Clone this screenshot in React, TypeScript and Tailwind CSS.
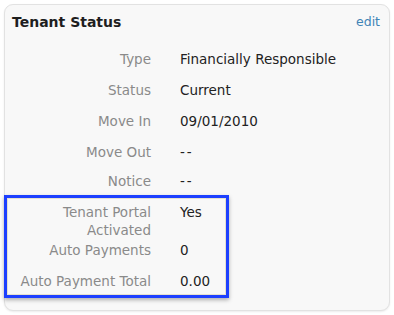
import React from "react";

const rows1: [string, string, string][] = [
  ["Type", "Financially Responsible", "h-[31px]"],
  ["Status", "Current", "h-[31px]"],
  ["Move In", "09/01/2010", "h-[31px]"],
  ["Move Out", "--", "h-[31px]"],
  ["Notice", "--", "h-[28px]"],
];

export default function App() {
  return (
    <div className="w-[394px] h-[315px] bg-white p-[4px]" style={{ fontFamily: '"DejaVu Sans", sans-serif' }}>
      <div className="w-[386px] h-[307px] rounded-[9px] border border-[#e2e2e2] bg-[#f8f8f8] shadow-[0_1px_2px_rgba(0,0,0,0.08)]">
        <div className="h-[38px] pt-[8px] pl-[7px] pr-[9px] flex items-start justify-between">
          <div className="text-[14px] leading-[18px] font-bold text-[#1e1e1e]">Tenant Status</div>
          <div className="text-[12.5px] leading-[18px] text-[#3f84b6]">edit</div>
        </div>
        <div className="text-[13.5px]">
          {rows1.map(([l, v, h]) => (
            <div key={l} className={`flex items-center ${h}`}>
              <div className="w-[146px] text-right text-[#8a8a8a] leading-[18px]">{l}</div>
              <div className="ml-[29px] text-[#222] leading-[18px]">{v === "--" ? <span className="tracking-[2px]">--</span> : v}</div>
            </div>
          ))}
          <div className="-ml-px w-[225px] border-[3px] border-[#1d40ff] shadow-[0_2px_4px_rgba(0,0,0,0.3),inset_0_0_0_1px_#e6e1cf] pt-[5px] pb-[5px]">
            <div className="flex items-start">
              <div className="w-[144px] text-right text-[#8a8a8a] leading-[18px]">Tenant Portal<br />Activated</div>
              <div className="ml-[29px] text-[#222] leading-[18px]">Yes</div>
            </div>
            <div className="flex items-start mt-[2px]">
              <div className="w-[144px] text-right text-[#8a8a8a] leading-[18px]">Auto Payments</div>
              <div className="ml-[29px] text-[#222] leading-[18px]">0</div>
            </div>
            <div className="flex items-start mt-[13px]">
              <div className="w-[144px] text-right text-[#8a8a8a] leading-[18px]">Auto Payment Total</div>
              <div className="ml-[29px] text-[#222] leading-[18px]">0.00</div>
            </div>
          </div>
        </div>
      </div>
    </div>
  );
}
